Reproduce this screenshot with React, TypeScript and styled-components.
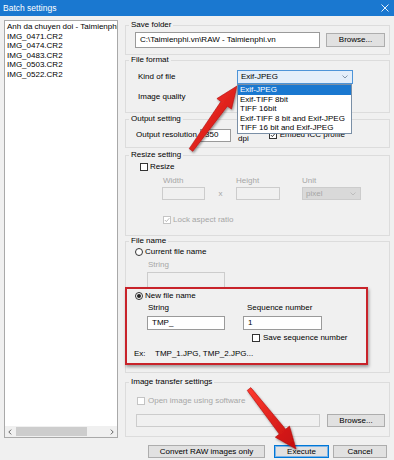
import React from 'react';
import styled, { createGlobalStyle } from 'styled-components';

const GlobalStyle = createGlobalStyle`
  html, body {
    margin: 0;
    padding: 0;
    background: #f0f0f0;
  }
  * {
    box-sizing: border-box;
  }
`;

const Window = styled.div`
  position: relative;
  width: 394px;
  height: 460px;
  overflow: hidden;
  background: #f0f0f0;
  font-family: 'Liberation Sans', Arial, sans-serif;
  font-size: 8px;
  color: #000;
`;

const TitleBar = styled.div`
  display: flex;
  align-items: center;
  justify-content: space-between;
  height: 16px;
  padding: 0 5px 0 3px;
  background: #1a78d0;
  color: #fff;
  font-size: 8.5px;
`;

const Main = styled.div`
  display: flex;
  gap: 7px;
  padding: 4px 0 0 4px;
`;

const FileList = styled.div`
  display: flex;
  flex-direction: column;
  width: 114px;
  height: 418px;
  border: 1px solid #a9a9a9;
  background: #fff;
`;

const ListItems = styled.div`
  flex: 1;
  padding: 1px 2px;
  overflow: hidden;
`;

const ListItem = styled.div`
  line-height: 9.6px;
  white-space: nowrap;
`;

const HScroll = styled.div`
  display: flex;
  align-items: center;
  height: 11px;
  padding: 0 3px;
  background: #f0f0f0;
`;

const ScrollTrack = styled.div`
  flex: 1;
  height: 9px;
  padding: 0 23px 0 4px;
`;

const ScrollThumb = styled.div`
  height: 100%;
  background: #cdcdcd;
`;

const Settings = styled.div`
  display: flex;
  flex-direction: column;
  width: 265px;
`;

const Group = styled.div<{ $mt: number; $h: number }>`
  position: relative;
  display: flex;
  flex-direction: column;
  margin-top: ${p => p.$mt}px;
  height: ${p => p.$h}px;
  border: 1px solid #dcdcdc;
`;

const GroupTitle = styled.div`
  align-self: flex-start;
  margin: -6px 0 0 3px;
  padding: 0 2px;
  line-height: 10px;
  background: #f0f0f0;
`;

const Row = styled.div<{ $mt?: number; $pl?: number; $gap?: number; $h?: number }>`
  display: flex;
  align-items: center;
  margin-top: ${p => p.$mt ?? 0}px;
  padding-left: ${p => p.$pl ?? 0}px;
  gap: ${p => p.$gap ?? 0}px;
  height: ${p => (p.$h ? `${p.$h}px` : 'auto')};
  line-height: 10px;
`;

const Label = styled.span<{ $w?: number; $disabled?: boolean }>`
  display: inline-block;
  width: ${p => (p.$w ? `${p.$w}px` : 'auto')};
  flex-shrink: 0;
  white-space: nowrap;
  color: ${p => (p.$disabled ? '#a6a6a6' : '#000')};
`;

const Unit = styled(Label)`
  margin: 8px 0 0 7px;
`;

const TextBox = styled.div<{ $w: number; $h?: number; $disabled?: boolean }>`
  display: flex;
  align-items: center;
  width: ${p => p.$w}px;
  height: ${p => p.$h ?? 14}px;
  padding: 0 4px;
  flex-shrink: 0;
  border: 1px solid ${p => (p.$disabled ? '#cccccc' : '#9a9a9a')};
  background: ${p => (p.$disabled ? '#f0f0f0' : '#fff')};
  white-space: nowrap;
  overflow: hidden;
`;

const Button = styled.div<{ $w: number; $h?: number; $focused?: boolean; $ml?: number }>`
  display: flex;
  align-items: center;
  justify-content: center;
  width: ${p => p.$w}px;
  height: ${p => p.$h ?? 13}px;
  margin-left: ${p => p.$ml ?? 0}px;
  flex-shrink: 0;
  background: #e1e1e1;
  border: 1px solid ${p => (p.$focused ? '#0078d7' : '#adadad')};
  box-shadow: ${p => (p.$focused ? 'inset 0 0 0 1px #7fb4e6' : 'none')};
  white-space: nowrap;
`;

const SelectWrap = styled.div`
  position: relative;
`;

const Select = styled.div<{ $w: number; $h?: number; $disabled?: boolean; $open?: boolean }>`
  display: flex;
  align-items: center;
  justify-content: space-between;
  width: ${p => p.$w}px;
  height: ${p => p.$h ?? 14}px;
  padding: 0 4px 0 3px;
  border: 1px solid ${p => (p.$open ? '#4d94d8' : p.$disabled ? '#cccccc' : '#adadad')};
  background: ${p => (p.$open ? '#e3eefa' : p.$disabled ? '#d9d9d9' : '#e1e1e1')};
  color: ${p => (p.$disabled ? '#a6a6a6' : '#000')};
`;

const DropList = styled.div`
  position: absolute;
  z-index: 5;
  top: 100%;
  left: 0;
  width: 115px;
  border: 1px solid #7a8fa6;
  background: #fff;
`;

const DropItem = styled.div<{ $active?: boolean }>`
  height: 9.6px;
  line-height: 9.6px;
  padding-left: 2px;
  white-space: nowrap;
  background: ${p => (p.$active ? '#1a78d0' : '#fff')};
  color: ${p => (p.$active ? '#fff' : '#000')};
`;

const Box = styled.span<{ $disabled?: boolean; $round?: boolean }>`
  display: inline-flex;
  align-items: center;
  justify-content: center;
  width: 8px;
  height: 8px;
  flex-shrink: 0;
  border: 1px solid ${p => (p.$disabled ? '#c4c4c4' : '#333')};
  border-radius: ${p => (p.$round ? '50%' : '0')};
  background: #fff;
`;

const Dot = styled.span`
  width: 4px;
  height: 4px;
  border-radius: 50%;
  background: #222;
`;

const SizeGrid = styled.div<{ $mt: number }>`
  display: grid;
  grid-template-columns: 74px 66px 59px;
  margin-top: ${p => p.$mt}px;
  padding-left: 36px;
  line-height: 10px;
`;

const Cell = styled.div`
  display: flex;
  align-items: center;
`;

const Times = styled.span`
  flex: 1;
  text-align: center;
  color: #a6a6a6;
`;

const NameGrid = styled.div<{ $mt: number }>`
  display: grid;
  grid-template-columns: 96px 90px;
  margin-top: ${p => p.$mt}px;
  padding-left: 21px;
  line-height: 10px;
`;

const GridLabel = styled.span<{ $pl: number; $disabled?: boolean }>`
  padding-left: ${p => p.$pl}px;
  white-space: nowrap;
  color: ${p => (p.$disabled ? '#a6a6a6' : '#000')};
`;

const Highlight = styled.div`
  position: absolute;
  left: -1px;
  top: 45px;
  width: 243px;
  height: 78px;
  border: 2px solid #c8232a;
  box-shadow: 1px 2px 3px rgba(0, 0, 0, 0.35);
  pointer-events: none;
`;

const Footer = styled.div`
  display: flex;
  justify-content: flex-end;
  margin-top: 7px;
  padding-right: 7px;
`;

const Overlay = styled.svg`
  position: absolute;
  left: 0;
  top: 0;
  pointer-events: none;
`;

const Chevron: React.FC<{ color?: string }> = ({ color = '#555' }) => (
  <svg width="6" height="4" viewBox="0 0 6 4">
    <polyline points="0.5,0.5 3,3 5.5,0.5" fill="none" stroke={color} strokeWidth="0.8" />
  </svg>
);

const Check: React.FC<{ disabled?: boolean; checked?: boolean }> = ({ disabled, checked }) => (
  <Box $disabled={disabled}>
    {checked && (
      <svg width="6" height="6" viewBox="0 0 6 6">
        <polyline points="0.8,3 2.4,4.6 5.3,1.2" fill="none" stroke={disabled ? '#b0b0b0' : '#222'} strokeWidth="0.9" />
      </svg>
    )}
  </Box>
);

const Radio: React.FC<{ on?: boolean }> = ({ on }) => <Box $round>{on && <Dot />}</Box>;

// red annotation arrow: tapered shaft + triangular head
const arrowPoints = (x1: number, y1: number, x2: number, y2: number) => {
  const tailW = 4.5;
  const neckW = 8;
  const headW = 18;
  const headLen = 22;
  const dx = x2 - x1;
  const dy = y2 - y1;
  const len = Math.hypot(dx, dy);
  const ux = dx / len;
  const uy = dy / len;
  const px = -uy;
  const py = ux;
  const bx = x2 - ux * headLen;
  const by = y2 - uy * headLen;
  const pts = [
    [x1 + (px * tailW) / 2, y1 + (py * tailW) / 2],
    [bx + (px * neckW) / 2, by + (py * neckW) / 2],
    [bx + (px * headW) / 2, by + (py * headW) / 2],
    [x2, y2],
    [bx - (px * headW) / 2, by - (py * headW) / 2],
    [bx - (px * neckW) / 2, by - (py * neckW) / 2],
    [x1 - (px * tailW) / 2, y1 - (py * tailW) / 2],
  ];
  return pts.map(p => `${p[0].toFixed(1)},${p[1].toFixed(1)}`).join(' ');
};

const files = [
  'Anh da chuyen doi - Taimienphi.vn',
  'IMG_0471.CR2',
  'IMG_0474.CR2',
  'IMG_0483.CR2',
  'IMG_0503.CR2',
  'IMG_0522.CR2',
];

const fileKinds = [
  'Exif-JPEG',
  'Exif-TIFF 8bit',
  'TIFF 16bit',
  'Exif-TIFF 8 bit and Exif-JPEG',
  'TIFF 16 bit and Exif-JPEG',
];

const App: React.FC = () => {
  return (
    <>
      <GlobalStyle />
      <Window>
        <TitleBar>
          <span>Batch settings</span>
          <svg width="8" height="8" viewBox="0 0 8 8">
            <path d="M0.5 0.5 L7.5 7.5 M7.5 0.5 L0.5 7.5" stroke="#fff" strokeWidth="0.9" />
          </svg>
        </TitleBar>

        <Main>
          <FileList>
            <ListItems>
              {files.map(f => (
                <ListItem key={f}>{f}</ListItem>
              ))}
            </ListItems>
            <HScroll>
              <svg width="4" height="6" viewBox="0 0 4 6">
                <polyline points="3.2,0.6 0.8,3 3.2,5.4" fill="none" stroke="#555" strokeWidth="0.9" />
              </svg>
              <ScrollTrack>
                <ScrollThumb />
              </ScrollTrack>
              <svg width="4" height="6" viewBox="0 0 4 6">
                <polyline points="0.8,0.6 3.2,3 0.8,5.4" fill="none" stroke="#555" strokeWidth="0.9" />
              </svg>
            </HScroll>
          </FileList>

          <Settings>
            <Group $mt={5} $h={30}>
              <GroupTitle>Save folder</GroupTitle>
              <Row $mt={2} $pl={9} $gap={6}>
                <TextBox $w={185} $h={16}>C:\Taimienphi.vn\RAW - Taimienphi.vn</TextBox>
                <Button $w={59} $h={14}>Browse...</Button>
              </Row>
            </Group>

            <Group $mt={5} $h={53}>
              <GroupTitle>File format</GroupTitle>
              <Row $mt={5} $pl={12}>
                <Label $w={99}>Kind of file</Label>
                <SelectWrap>
                  <Select $w={116} $open>
                    <span>Exif-JPEG</span>
                    <Chevron color="#6b7f95" />
                  </Select>
                  <DropList>
                    {fileKinds.map((k, i) => (
                      <DropItem key={k} $active={i === 0}>
                        {k}
                      </DropItem>
                    ))}
                  </DropList>
                </SelectWrap>
              </Row>
              <Row $mt={6} $pl={12} $h={14}>
                <Label>Image quality</Label>
              </Row>
            </Group>

            <Group $mt={6} $h={29}>
              <GroupTitle>Output setting</GroupTitle>
              <Row $mt={4} $pl={10} $h={14}>
                <Label $w={64}>Output resolution</Label>
                <TextBox $w={31} $h={13}>350</TextBox>
                <Unit>dpi</Unit>
                <Row $pl={20} $gap={3}>
                  <Check checked />
                  <Label>Embed ICC profile</Label>
                </Row>
              </Row>
            </Group>

            <Group $mt={7} $h={81}>
              <GroupTitle>Resize setting</GroupTitle>
              <Row $mt={2} $pl={14} $gap={2} $h={10}>
                <Check />
                <Label>Resize</Label>
              </Row>
              <SizeGrid $mt={4}>
                <GridLabel $pl={1} $disabled>Width</GridLabel>
                <GridLabel $pl={0} $disabled>Height</GridLabel>
                <GridLabel $pl={0} $disabled>Unit</GridLabel>
              </SizeGrid>
              <SizeGrid $mt={1}>
                <Cell>
                  <TextBox $w={43} $h={13} $disabled />
                  <Times>x</Times>
                </Cell>
                <Cell>
                  <TextBox $w={44} $h={13} $disabled />
                </Cell>
                <Cell>
                  <Select $w={59} $h={13} $disabled>
                    <span>pixel</span>
                    <Chevron color="#b5b5b5" />
                  </Select>
                </Cell>
              </SizeGrid>
              <Row $mt={15} $pl={37} $gap={2} $h={10}>
                <Check disabled checked />
                <Label $disabled>Lock aspect ratio</Label>
              </Row>
            </Group>

            <Group $mt={5} $h={132}>
              <GroupTitle>File name</GroupTitle>
              <Row $mt={1} $pl={9} $gap={2} $h={10}>
                <Radio />
                <Label>Current file name</Label>
              </Row>
              <Row $mt={3} $pl={22} $h={10}>
                <Label $disabled>String</Label>
              </Row>
              <Row $mt={2} $pl={21}>
                <TextBox $w={78} $h={16} $disabled />
              </Row>
              <Row $mt={3} $pl={9} $gap={2} $h={10}>
                <Radio on />
                <Label>New file name</Label>
              </Row>
              <NameGrid $mt={2}>
                <GridLabel $pl={1}>String</GridLabel>
                <GridLabel $pl={4}>Sequence number</GridLabel>
              </NameGrid>
              <NameGrid $mt={3}>
                <TextBox $w={78} $h={14}>TMP_</TextBox>
                <TextBox $w={79} $h={14}>1</TextBox>
              </NameGrid>
              <Row $mt={3} $pl={126} $gap={3} $h={10}>
                <Check />
                <Label>Save sequence number</Label>
              </Row>
              <Row $mt={6} $pl={8} $h={10}>
                <Label $w={21}>Ex:</Label>
                <Label>TMP_1.JPG, TMP_2.JPG...</Label>
              </Row>
              <Highlight />
            </Group>

            <Group $mt={9} $h={55}>
              <GroupTitle>Image transfer settings</GroupTitle>
              <Row $mt={9} $pl={11} $gap={3} $h={10}>
                <Check disabled />
                <Label $disabled>Open image using software</Label>
              </Row>
              <Row $mt={8} $pl={10} $gap={7}>
                <TextBox $w={184} $h={13} $disabled />
                <Button $w={58} $h={13}>Browse...</Button>
              </Row>
            </Group>
          </Settings>
        </Main>

        <Footer>
          <Button $w={117}>Convert RAW images only</Button>
          <Button $w={55} $ml={9} $focused>Execute</Button>
          <Button $w={54} $ml={4}>Cancel</Button>
        </Footer>

        <Overlay width="394" height="460" viewBox="0 0 394 460">
          <defs>
            <linearGradient id="arrowFill" x1="0" y1="0" x2="1" y2="1">
              <stop offset="0" stopColor="#ff3b30" />
              <stop offset="1" stopColor="#c30d0d" />
            </linearGradient>
            <filter id="arrowShadow" x="-20%" y="-20%" width="140%" height="140%">
              <feDropShadow dx="1" dy="1.5" stdDeviation="1.2" floodColor="#000" floodOpacity="0.4" />
            </filter>
          </defs>
          <polygon
            points={arrowPoints(191, 150, 237, 86)}
            fill="url(#arrowFill)"
            stroke="#b00c0c"
            strokeWidth="0.6"
            strokeLinejoin="round"
            filter="url(#arrowShadow)"
          />
          <polygon
            points={arrowPoints(249, 389, 296, 449)}
            fill="url(#arrowFill)"
            stroke="#b00c0c"
            strokeWidth="0.6"
            strokeLinejoin="round"
            filter="url(#arrowShadow)"
          />
          <path
            d="M296 87 L296 96 L298.2 94 L299.8 97.5 L301 97 L299.5 93.6 L302.4 93.6 Z"
            fill="#fff"
            stroke="#000"
            strokeWidth="0.6"
            strokeLinejoin="round"
          />
        </Overlay>
      </Window>
    </>
  );
};

export default App;
